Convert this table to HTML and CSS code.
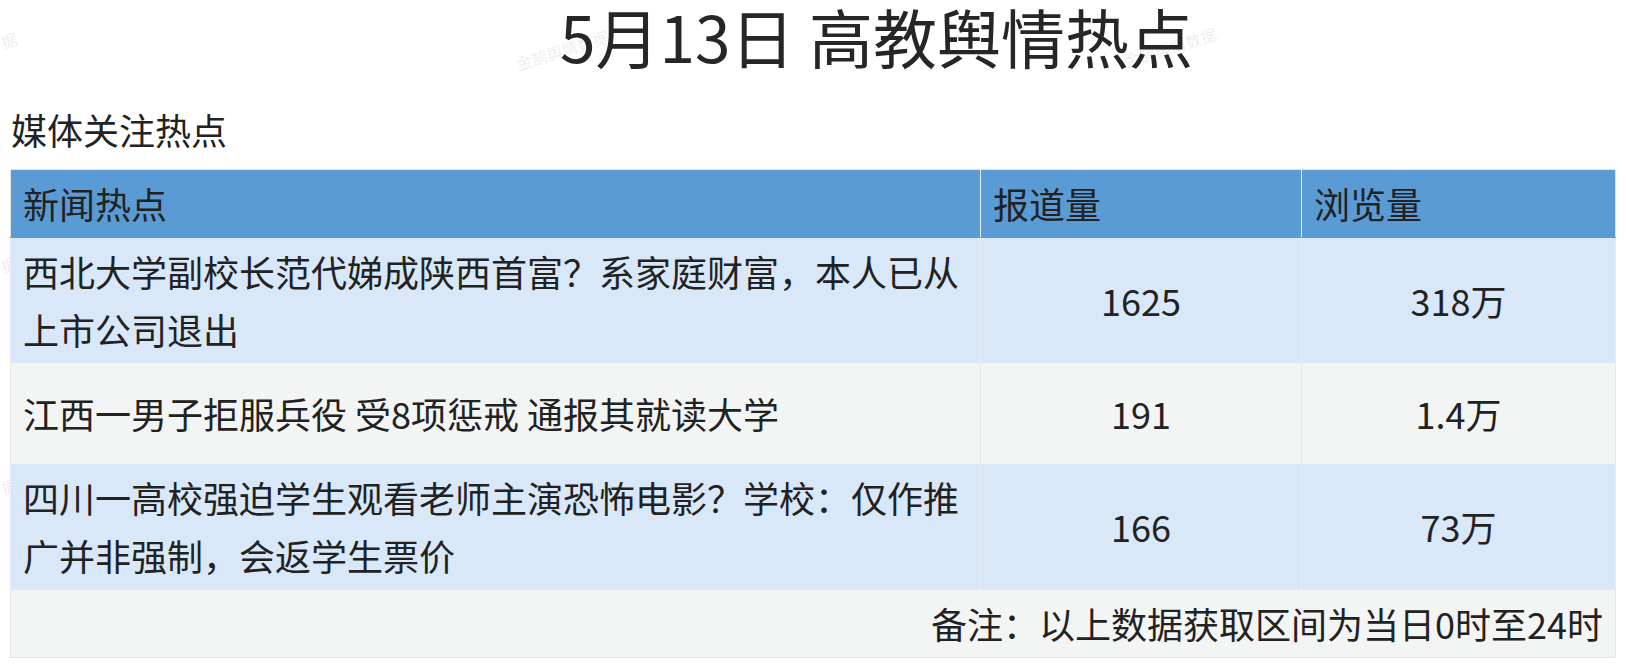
FILE: index.html
```html
<!DOCTYPE html>
<html lang="zh-CN">
<head>
<meta charset="utf-8">
<title>5月13日 高教舆情热点</title>
<link rel="stylesheet" href="styles.css">
</head>
<body>
<div class="watermarks" aria-hidden="true">
  <span class="wm wm-edge wm-a">据</span>
  <span class="wm wm-b">金鹄舆情数据</span>
  <span class="wm wm-c">金鹄舆情数据</span>
  <span class="wm wm-edge wm-d">据</span>
  <span class="wm wm-edge wm-e">据</span>
</div>
<main class="page">
  <h1 class="title">5月13日 高教舆情热点</h1>
  <h2 class="subtitle">媒体关注热点</h2>
  <table class="hot">
    <colgroup>
      <col class="c-news">
      <col class="c-report">
      <col class="c-view">
    </colgroup>
    <thead>
      <tr>
        <th>新闻热点</th>
        <th>报道量</th>
        <th>浏览量</th>
      </tr>
    </thead>
    <tbody>
      <tr class="blue">
        <td class="news">西北大学副校长范代娣成陕西首富？系家庭财富，本人已从上市公司退出</td>
        <td class="num">1625</td>
        <td class="num">318万</td>
      </tr>
      <tr class="gray single">
        <td class="news">江西一男子拒服兵役 受8项惩戒 通报其就读大学</td>
        <td class="num">191</td>
        <td class="num">1.4万</td>
      </tr>
      <tr class="blue">
        <td class="news">四川一高校强迫学生观看老师主演恐怖电影？学校：仅作推广并非强制，会返学生票价</td>
        <td class="num">166</td>
        <td class="num">73万</td>
      </tr>
      <tr class="gray">
        <td class="note" colspan="3">备注：以上数据获取区间为当日0时至24时</td>
      </tr>
    </tbody>
  </table>
</main>
</body>
</html>
```

FILE: styles.css
```css
html, body {
  margin: 0;
  padding: 0;
  background: #ffffff;
}

body {
  font-family: "Noto Sans CJK SC", "Noto Sans", sans-serif;
  color: #222222;
  width: 1626px;
  height: 664px;
  overflow: hidden;
  position: relative;
}

.watermarks {
  position: absolute;
  inset: 0;
  z-index: 0;
  pointer-events: none;
}

.wm {
  position: absolute;
  font-size: 16px;
  line-height: 20px;
  color: rgba(0, 0, 0, 0.09);
  white-space: nowrap;
  transform: translate(-50%, -50%) rotate(-17deg);
}

.wm-edge {
  transform: rotate(-17deg);
}

.wm-a { left: 1px; top: 30px; }
.wm-b { left: 562px; top: 50px; }
.wm-c { left: 1170px; top: 47px; }
.wm-d { left: 1px; top: 254px; }
.wm-e { left: 1px; top: 476px; }

.page {
  position: relative;
  z-index: 1;
  padding: 0 11px 0 10px;
}

.title {
  margin: 0;
  padding-left: 128px;
  text-align: center;
  font-size: 64px;
  line-height: 70px;
  font-weight: 400;
  color: #262626;
}

.subtitle {
  margin: 31px 0 10px 1px;
  font-size: 36px;
  line-height: 57.6px;
  font-weight: 400;
  color: #222222;
}

.hot {
  width: 1605px;
  border-collapse: collapse;
  table-layout: fixed;
  font-size: 36px;
  line-height: 57.6px;
  border: 1px solid #e2e4e4;
}

.c-news { width: 970px; }
.c-report { width: 321px; }
.c-view { width: 314px; }

.hot th {
  background: #5b9bd5;
  font-weight: 400;
  text-align: left;
  padding: 5px 12px;
  color: #222222;
  border-top: 1px solid #e2e4e4;
  border-bottom: 1px solid #5b9bd5;
  border-left: 1px solid #e3edf7;
  border-right: 1px solid #e3edf7;
}

.hot th:first-child {
  border-left: 1px solid #e2e4e4;
}

.hot th:last-child {
  border-right: 1px solid #e2e4e4;
}

.hot td {
  padding: 5px 12px;
  border-left: 1px solid #e4e6e6;
  border-right: 1px solid #e4e6e6;
  vertical-align: middle;
}

.hot tr.blue td {
  background: #d9e8f9;
  border-left-color: #e6edf4;
  border-right-color: #e6edf4;
}

.hot tr.gray td {
  background: #f3f5f4;
}

.hot tr.single {
  height: 101px;
}

.hot td.num {
  text-align: center;
}

.hot td.note {
  text-align: right;
}
```
